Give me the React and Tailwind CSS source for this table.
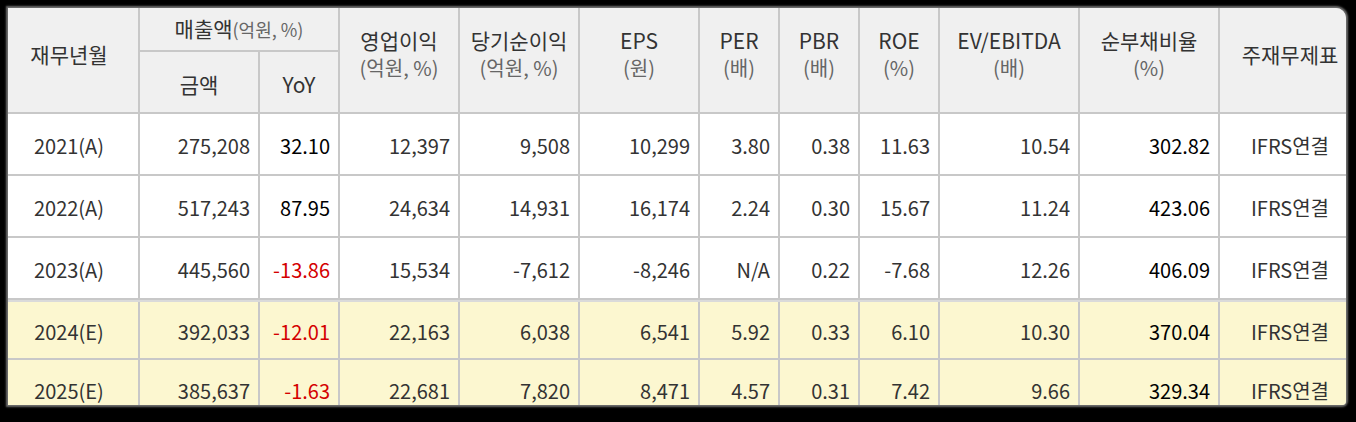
const COLS = 'grid grid-cols-[138px_118px_78px_118px_118px_118px_78px_78px_78px_138px_138px_140px] gap-x-[2px]';

const rows = [
  { year: '2021(A)', sales: '275,208', yoy: '32.10', op: '12,397', net: '9,508', eps: '10,299', per: '3.80', pbr: '0.38', roe: '11.63', ev: '10.54', debt: '302.82' },
  { year: '2022(A)', sales: '517,243', yoy: '87.95', op: '24,634', net: '14,931', eps: '16,174', per: '2.24', pbr: '0.30', roe: '15.67', ev: '11.24', debt: '423.06' },
  { year: '2023(A)', sales: '445,560', yoy: '-13.86', op: '15,534', net: '-7,612', eps: '-8,246', per: 'N/A', pbr: '0.22', roe: '-7.68', ev: '12.26', debt: '406.09' },
  { year: '2024(E)', sales: '392,033', yoy: '-12.01', op: '22,163', net: '6,038', eps: '6,541', per: '5.92', pbr: '0.33', roe: '6.10', ev: '10.30', debt: '370.04', est: true },
  { year: '2025(E)', sales: '385,637', yoy: '-1.63', op: '22,681', net: '7,820', eps: '8,471', per: '4.57', pbr: '0.31', roe: '7.42', ev: '9.66', debt: '329.34', est: true },
];

function Head({ title, unit, className = '' }) {
  return (
    <div className={`bg-[#f0f0f0] row-span-2 flex flex-col items-center justify-center pb-[12px] leading-[28px] ${className}`}>
      <span className="text-[#333] text-[21px]">{title}</span>
      {unit && <span className="text-[#666]">{unit}</span>}
    </div>
  );
}

function Num({ children, className = '' }) {
  return <div className={`flex items-center justify-end pr-[8px] pt-[4px] ${className}`}>{children}</div>;
}

function Row({ r, first }) {
  const bg = r.est ? 'bg-[#fcf7d0]' : 'bg-white';
  const yoyColor = r.yoy.startsWith('-') ? 'text-[#d40000]' : 'text-black';
  return (
    <div className={`${COLS} text-[#333] ${first ? 'border-t-2 border-[#dadada]' : ''} ${r.est ? 'h-[58px]' : 'h-[60px]'}`}>
      <div className={`${bg} flex items-center justify-center pt-[4px]`}>{r.year}</div>
      <Num className={bg}>{r.sales}</Num>
      <Num className={`${bg} ${yoyColor}`}>{r.yoy}</Num>
      <Num className={bg}>{r.op}</Num>
      <Num className={bg}>{r.net}</Num>
      <Num className={bg}>{r.eps}</Num>
      <Num className={bg}>{r.per}</Num>
      <Num className={bg}>{r.pbr}</Num>
      <Num className={bg}>{r.roe}</Num>
      <Num className={bg}>{r.ev}</Num>
      <Num className={`${bg} text-black`}>{r.debt}</Num>
      <div className={`${bg} flex items-center justify-center pt-[4px]`}>IFRS연결</div>
    </div>
  );
}

export default function App() {
  return (
    <div className="w-[1356px] h-[422px] bg-black pt-[8px] pl-[8px] overflow-hidden">
      <div
        className="w-[1338px] h-[397px] overflow-hidden rounded-tr-[10px] rounded-br-[4px] shadow-[0_0_2px_2px_rgba(200,200,200,0.55)] bg-[#c8c8c8] text-[20px]"
        style={{ fontFamily: '"Noto Sans CJK KR", "Noto Sans", sans-serif' }}
      >
        <div className="-ml-[8px] flex flex-col gap-y-[2px] w-[1380px]">
          <div className={`${COLS} grid-rows-[42px_60px] gap-y-[2px]`}>
            <Head title="재무년월" />
            <div className="bg-[#f0f0f0] col-span-2 flex items-center justify-center">
              <span className="text-[#333] text-[21px]">매출액</span>
              <span className="text-[#666] text-[18px]">(억원, %)</span>
            </div>
            <Head title="영업이익" unit="(억원, %)" />
            <Head title="당기순이익" unit="(억원, %)" />
            <Head title="EPS" unit="(원)" />
            <Head title="PER" unit="(배)" />
            <Head title="PBR" unit="(배)" />
            <Head title="ROE" unit="(%)" />
            <Head title="EV/EBITDA" unit="(배)" />
            <Head title="순부채비율" unit="(%)" />
            <Head title="주재무제표" />
            <div className="bg-[#f0f0f0] flex items-center justify-center pt-[6px] text-[#333] text-[21px]">금액</div>
            <div className="bg-[#f0f0f0] flex items-center justify-center pt-[6px] text-[#333] text-[21px]">YoY</div>
          </div>
          {rows.map((r, i) => (
            <Row key={r.year} r={r} first={i === 3} />
          ))}
        </div>
      </div>
    </div>
  );
}
